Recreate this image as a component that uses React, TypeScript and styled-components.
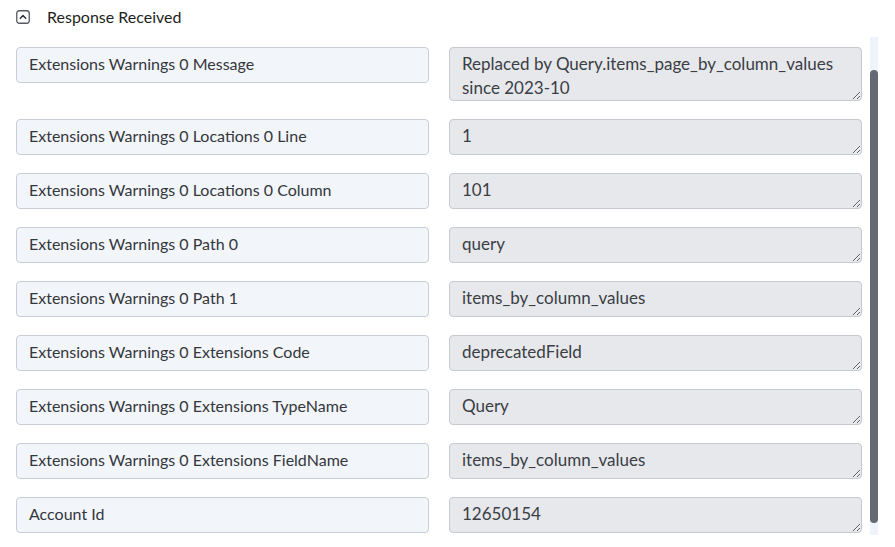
import React from "react";
import styled, {createGlobalStyle} from "styled-components";

const GlobalStyle = createGlobalStyle`
  html, body {
    margin: 0;
    padding: 0;
    background: #ffffff;
    font-family: Lato, "Noto Sans", sans-serif;
  }
`;

type FieldType = {label: string, value: string, tall?: boolean}

const fields: FieldType[] = [
    {label: 'Extensions Warnings 0 Message', value: 'Replaced by Query.items_page_by_column_values since 2023-10', tall: true},
    {label: 'Extensions Warnings 0 Locations 0 Line', value: '1'},
    {label: 'Extensions Warnings 0 Locations 0 Column', value: '101'},
    {label: 'Extensions Warnings 0 Path 0', value: 'query'},
    {label: 'Extensions Warnings 0 Path 1', value: 'items_by_column_values'},
    {label: 'Extensions Warnings 0 Extensions Code', value: 'deprecatedField'},
    {label: 'Extensions Warnings 0 Extensions TypeName', value: 'Query'},
    {label: 'Extensions Warnings 0 Extensions FieldName', value: 'items_by_column_values'},
    {label: 'Account Id', value: '12650154'},
]

export default function App() {
    const mappedFields = fields.map((el, index) => (
        <Row key={index}>
            <Label>{el.label}</Label>
            <Value readOnly value={el.value} $tall={el.tall}/>
        </Row>
    ))

    return (
        <Page>
            <GlobalStyle/>
            <Header>
                <Toggle>
                    <svg width="14" height="14" viewBox="0 0 14 14">
                        <rect x="0.75" y="0.75" width="12.5" height="12.5" rx="2.5" fill="none" stroke="#555a61" strokeWidth="1.3"/>
                        <path d="M4.3 8.2 L7 5.5 L9.7 8.2" fill="none" stroke="#2b2f35" strokeWidth="1.5" strokeLinecap="round" strokeLinejoin="round"/>
                    </svg>
                </Toggle>
                <Title>Response Received</Title>
            </Header>
            <Body>
                <List>
                    {mappedFields}
                </List>
                <Track>
                    <Thumb/>
                </Track>
            </Body>
        </Page>
    )
}

const Page = styled.div`
  display: flex;
  flex-direction: column;
  width: 895px;
  height: 547px;
  overflow: hidden;
`;

const Header = styled.div`
  display: flex;
  align-items: center;
  height: 34px;
  padding-left: 16px;
`;

const Toggle = styled.div`
  display: flex;
  width: 14px;
  height: 14px;
`;

const Title = styled.span`
  margin-left: 17px;
  margin-top: -1px;
  font-size: 16px;
  color: #1e1f22;
`;

const Body = styled.div`
  display: flex;
  align-items: flex-start;
`;

const List = styled.div`
  display: flex;
  flex-direction: column;
  gap: 18px;
  padding: 13px 0 0 16px;
`;

const Row = styled.div`
  display: grid;
  grid-template-columns: 413px 413px;
  column-gap: 20px;
  align-items: start;
`;

const Label = styled.div`
  box-sizing: border-box;
  height: 36px;
  padding: 6px 12px 0 12px;
  background: #f2f5f9;
  border: 1px solid #c9ced6;
  border-radius: 4px;
  font-size: 16px;
  line-height: 19px;
  color: #34373c;
`;

const Value = styled.textarea<{$tall?: boolean}>`
  box-sizing: border-box;
  display: block;
  width: 413px;
  height: ${props => props.$tall ? '54px' : '36px'};
  margin: 0;
  padding: 4px 12px 0 12px;
  background: #e6e8ec;
  border: 1px solid #c6cad1;
  border-radius: 4px;
  font-family: Lato, "Noto Sans", sans-serif;
  font-size: 17px;
  line-height: 24px;
  color: #3b3e44;
  resize: vertical;
  overflow: hidden;
  outline: none;
`;

const Track = styled.div`
  display: flex;
  flex-direction: column;
  width: 8px;
  height: 498px;
  margin: 3px 0 0 8px;
  background: #eef3fc;
`;

const Thumb = styled.div`
  width: 8px;
  height: 453px;
  margin-top: 33px;
  background: #646a73;
  border-radius: 4px;
`;
